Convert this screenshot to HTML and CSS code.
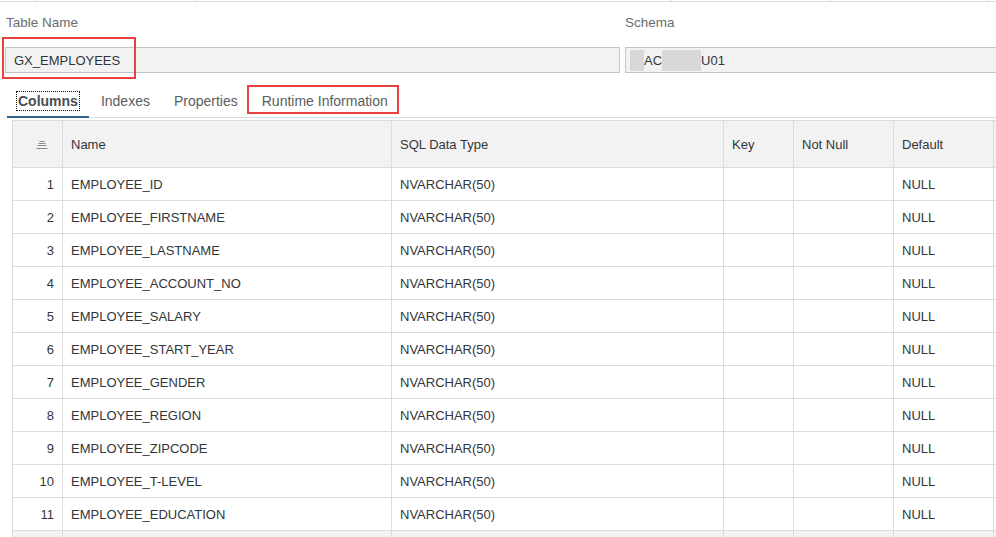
FILE: index.html
```html
<!DOCTYPE html>
<html>
<head>
<meta charset="utf-8">
<link rel="stylesheet" href="styles.css">
</head>
<body>
<div class="topstrip">
  <div class="ts c1"></div><div class="ts c2"></div><div class="ts c3"></div><div class="ts c4"></div><div class="ts c5"></div>
</div>
<div class="fields">
  <div class="field">
    <div class="label">Table Name</div>
    <div class="input"><span>GX_EMPLOYEES</span></div>
    <div class="hl hl-name"></div>
  </div>
  <div class="field">
    <div class="label">Schema</div>
    <div class="input schema"><span class="blur b1"></span><span>AC</span><span class="blur b2"></span><span>U01</span></div>
  </div>
</div>
<div class="tabbar">
  <div class="tab active"><span class="focus">Columns</span></div>
  <div class="tab">Indexes</div>
  <div class="tab">Properties</div>
  <div class="tab runtime">Runtime Information<div class="hl hl-tab"></div></div>
</div>
<div class="tablewrap">
<table class="grid">
  <colgroup>
    <col class="w-num"><col class="w-name"><col class="w-type"><col class="w-key"><col class="w-nn"><col class="w-def"><col class="w-rest">
  </colgroup>
  <thead>
    <tr>
      <th class="num"><svg class="sort" width="12" height="8" viewBox="0 0 12 8"><path d="M3.5 0.5h5M2.5 2.5h7M1.5 4.5h9M0.5 7.5h11" stroke="#8a8a8a" stroke-width="1" fill="none"/></svg></th>
      <th>Name</th><th>SQL Data Type</th><th>Key</th><th>Not Null</th><th>Default</th><th></th>
    </tr>
  </thead>
  <tbody>
    <tr><td class="num">1</td><td>EMPLOYEE_ID</td><td>NVARCHAR(50)</td><td></td><td></td><td>NULL</td><td></td></tr>
    <tr><td class="num">2</td><td>EMPLOYEE_FIRSTNAME</td><td>NVARCHAR(50)</td><td></td><td></td><td>NULL</td><td></td></tr>
    <tr><td class="num">3</td><td>EMPLOYEE_LASTNAME</td><td>NVARCHAR(50)</td><td></td><td></td><td>NULL</td><td></td></tr>
    <tr><td class="num">4</td><td>EMPLOYEE_ACCOUNT_NO</td><td>NVARCHAR(50)</td><td></td><td></td><td>NULL</td><td></td></tr>
    <tr><td class="num">5</td><td>EMPLOYEE_SALARY</td><td>NVARCHAR(50)</td><td></td><td></td><td>NULL</td><td></td></tr>
    <tr><td class="num">6</td><td>EMPLOYEE_START_YEAR</td><td>NVARCHAR(50)</td><td></td><td></td><td>NULL</td><td></td></tr>
    <tr><td class="num">7</td><td>EMPLOYEE_GENDER</td><td>NVARCHAR(50)</td><td></td><td></td><td>NULL</td><td></td></tr>
    <tr><td class="num">8</td><td>EMPLOYEE_REGION</td><td>NVARCHAR(50)</td><td></td><td></td><td>NULL</td><td></td></tr>
    <tr><td class="num">9</td><td>EMPLOYEE_ZIPCODE</td><td>NVARCHAR(50)</td><td></td><td></td><td>NULL</td><td></td></tr>
    <tr><td class="num">10</td><td>EMPLOYEE_T-LEVEL</td><td>NVARCHAR(50)</td><td></td><td></td><td>NULL</td><td></td></tr>
    <tr><td class="num">11</td><td>EMPLOYEE_EDUCATION</td><td>NVARCHAR(50)</td><td></td><td></td><td>NULL</td><td></td></tr>
    <tr class="empty"><td></td><td></td><td></td><td></td><td></td><td></td><td></td></tr>
  </tbody>
</table>
</div>
</body>
</html>
```
FILE: styles.css
```css
* { box-sizing: border-box; }
html, body { margin: 0; padding: 0; }
body {
  width: 996px;
  height: 537px;
  overflow: hidden;
  background: #fff;
  font-family: "Liberation Sans", Arial, sans-serif;
  font-size: 13px;
  color: #32363a;
}
.topstrip {
  display: flex;
  height: 2px;
  border-bottom: 1px solid #dcdcdc;
}
.ts { height: 1px; border-right: 1px solid #dcdcdc; flex: none; }
.c1 { width: 37px; }
.c2 { width: 159px; }
.c3 { width: 476px; }
.c4 { width: 159px; }
.c5 { width: 158px; }

.fields {
  display: grid;
  grid-template-columns: 615px 1fr;
  column-gap: 5px;
  padding: 13px 0 0 5px;
}
.field { position: relative; }
.label {
  height: 16px;
  line-height: 16px;
  margin: 0 0 16px 1px;
  color: #6a6d70;
  font-size: 13.5px;
}
.field + .field .label { margin-left: 0; }
.input {
  height: 26px;
  border: 1px solid #c4c4c4;
  background: #f2f2f2;
  display: flex;
  align-items: center;
  padding-left: 8px;
  color: #32363a;
  white-space: nowrap;
}
.input.schema { padding-left: 4px; margin-right: -10px; }
.blur { display: inline-block; height: 21px; background: #d8d8d8; }
.b1 { width: 14px; }
.b2 { width: 39px; }
.hl {
  position: absolute;
  border: 2px solid #e8403f;
  pointer-events: none;
}
.hl-name { left: -3px; top: 22px; width: 134px; height: 42px; }

.tabbar {
  display: flex;
  margin: 12px 0 0 7px;
  height: 33px;
  border-bottom: 1px solid #dcdcdc;
  font-size: 14px;
}
.tab {
  position: relative;
  display: flex;
  align-items: center;
  padding: 1px 12px 0 12px;
  color: #5a5d60;
  margin-bottom: -1px;
  border-bottom: 2px solid transparent;
}
.tab.active {
  border-bottom-color: #346187;
  color: #4a4d50;
  font-weight: bold;
  padding: 1px 10px 0 10px;
}
.focus { outline: 1px dotted #111; outline-offset: 0; padding: 1px 1px; }
.tab.runtime { padding: 1px 11px 0 12px; }
.hl-tab { left: -3px; top: 0; right: 0; bottom: 2px; }

.tablewrap { margin: 2px 0 0 12px; overflow: hidden; }
.grid {
  border-collapse: collapse;
  table-layout: fixed;
  width: 1100px;
}
.w-num { width: 50px; }
.w-name { width: 329px; }
.w-type { width: 332px; }
.w-key { width: 70px; }
.w-nn { width: 100px; }
.w-def { width: 100px; }
.w-rest { width: 119px; }
.grid th, .grid td {
  border: 1px solid #dcdcdc;
  padding: 0 8px;
  text-align: left;
  white-space: nowrap;
  overflow: hidden;
}
.grid th {
  height: 47px;
  background: #f2f2f2;
  font-weight: normal;
  color: #32363a;
}
.grid td { height: 33px; }
.grid .num { text-align: right; padding-right: 8px; }
.grid th.num { text-align: center; padding: 0; }
.sort { display: inline-block; vertical-align: middle; margin-left: 8px; }
.grid tr.empty td { background: #f2f2f2; height: 20px; }
```
